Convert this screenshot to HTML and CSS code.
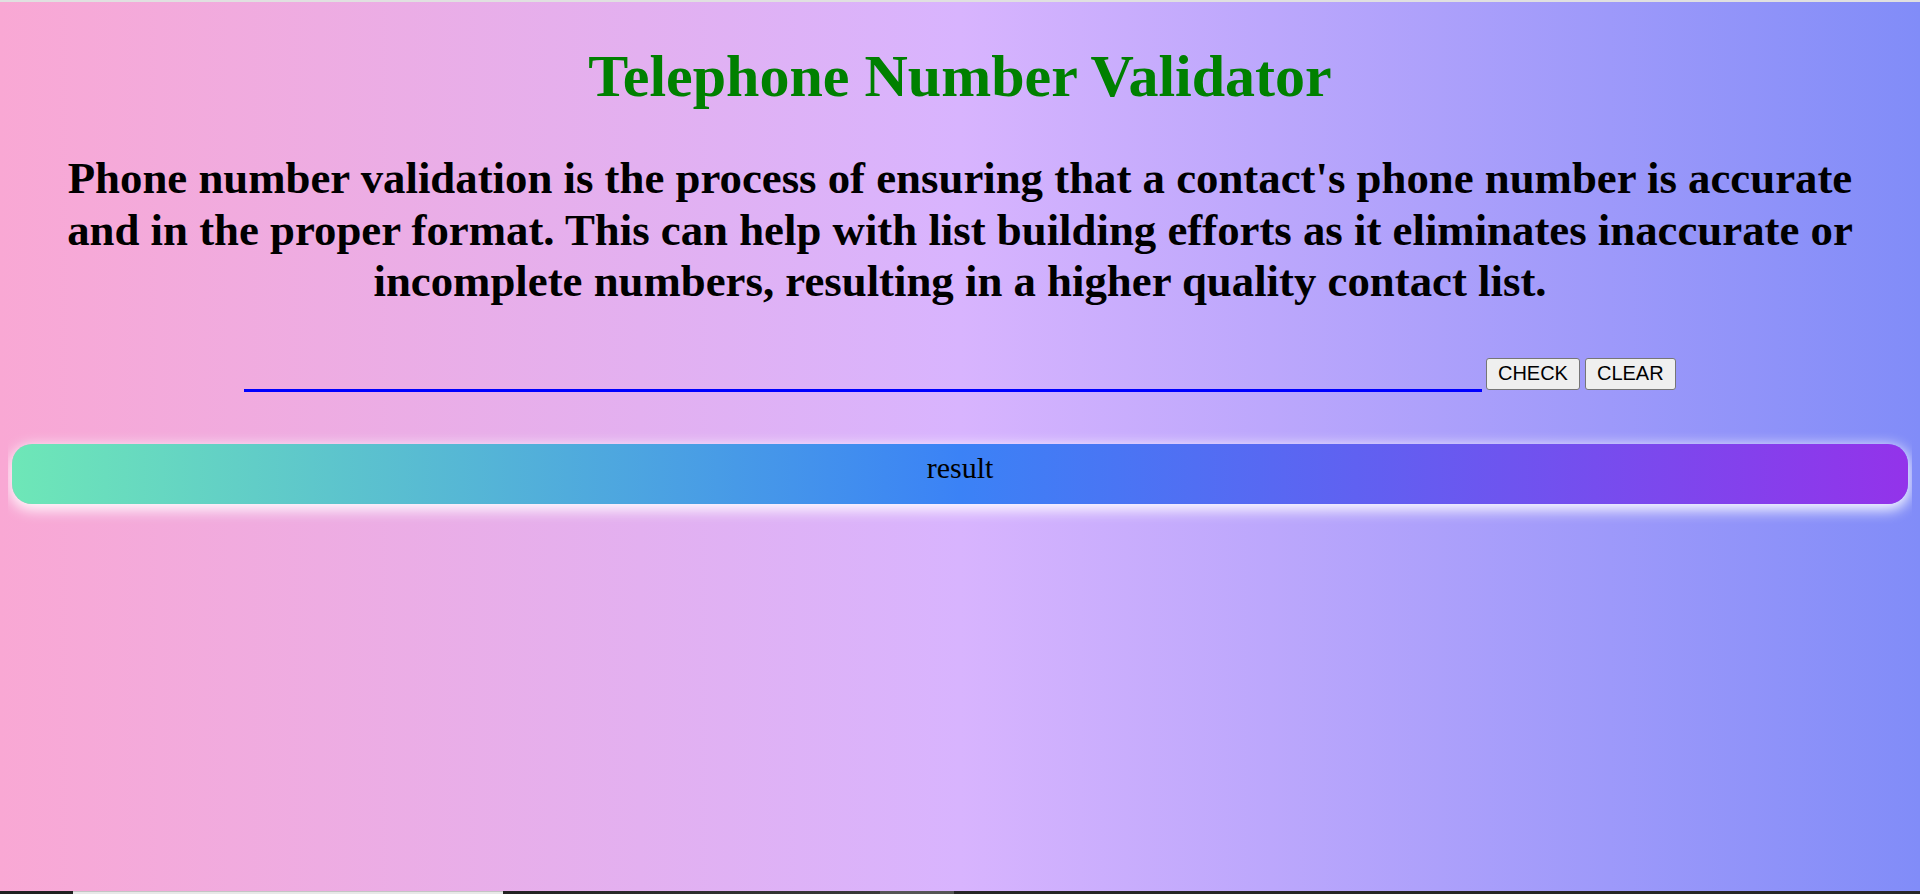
FILE: index.html
```html
<!DOCTYPE html>
<html lang="en">
<head>
<meta charset="utf-8">
<title>Telephone Number Validator</title>
<link rel="stylesheet" href="styles.css">
</head>
<body>
  <div class="topline"></div>
  <h1 class="title">Telephone Number Validator</h1>
  <h2 class="intro">Phone number validation is the process of ensuring that a contact's phone number is accurate and in the proper format. This can help with list building efforts as it eliminates inaccurate or incomplete numbers, resulting in a higher quality contact list.</h2>
  <div class="form-row">
    <input class="phone-input" type="text" aria-label="phone number">
    <button class="btn" type="button">CHECK</button>
    <button class="btn" type="button">CLEAR</button>
  </div>
  <div class="result">result</div>
  <div class="bottombar">
    <span class="seg seg-a"></span>
    <span class="seg seg-b"></span>
    <span class="seg seg-c"></span>
    <span class="seg seg-d"></span>
    <span class="seg seg-e"></span>
  </div>
</body>
</html>
```
FILE: styles.css
```css
html {
  height: 100%;
}
body {
  margin: 8px;
  min-height: calc(100% - 16px);
  font-family: "Liberation Serif", "Times New Roman", serif;
  background: linear-gradient(to right, #f9a8d4, #d8b4fe, #818cf8);
  background-attachment: fixed;
  text-align: center;
}
.topline {
  position: fixed;
  top: 0;
  left: 0;
  right: 0;
  height: 2px;
  background: #e0e0e0;
}
.title {
  margin: 34px 0 0;
  font-size: 60px;
  font-weight: bold;
  line-height: 69px;
  color: #008000;
}
.intro {
  margin: 42px 0 0;
  padding: 0 40px;
  font-size: 44.8px;
  font-weight: bold;
  line-height: 51.5px;
  color: #000;
}
.form-row {
  display: flex;
  justify-content: center;
  align-items: flex-end;
  margin-top: 38px;
}
.phone-input {
  width: 65%;
  height: 46px;
  box-sizing: border-box;
  margin: 0 4px 0 0;
  padding: 0 4px;
  border: none;
  border-bottom: 3px solid #0000ff;
  background: transparent;
  font-family: "Liberation Sans", Arial, sans-serif;
  font-size: 20px;
  outline: none;
}
.btn {
  margin: 0 5px 2px 0;
  height: 32px;
  padding: 0 11px;
  font-family: "Liberation Sans", Arial, sans-serif;
  font-size: 20px;
  color: #000;
  background: #efefef;
  border: 1px solid #767676;
  border-radius: 3px;
}
.btn:last-child {
  margin-right: 0;
}
.result {
  margin: 52px 4px 0;
  height: 60px;
  box-sizing: border-box;
  padding-top: 7px;
  border-radius: 20px;
  background: linear-gradient(to right, #6ee7b7, #3b82f6, #9333ea);
  box-shadow: 0 4px 14px 2px rgba(255, 255, 255, 0.95);
  font-size: 30px;
  line-height: 34px;
  color: #000;
}
.bottombar {
  position: fixed;
  left: 0;
  right: 0;
  bottom: 0;
  height: 3px;
  display: flex;
}
.seg {
  display: block;
  height: 3px;
}
.seg-a {
  width: 73px;
  background: #202020;
}
.seg-b {
  width: 430px;
  box-sizing: border-box;
  background: #e8e8e8;
  border-top: 1px solid #c4c4c4;
}
.seg-c {
  width: 377px;
  background: linear-gradient(to right, #222222, #3a3a3a);
}
.seg-d {
  width: 74px;
  background: #555555;
}
.seg-e {
  flex: 1;
  background: #262626;
}
```
